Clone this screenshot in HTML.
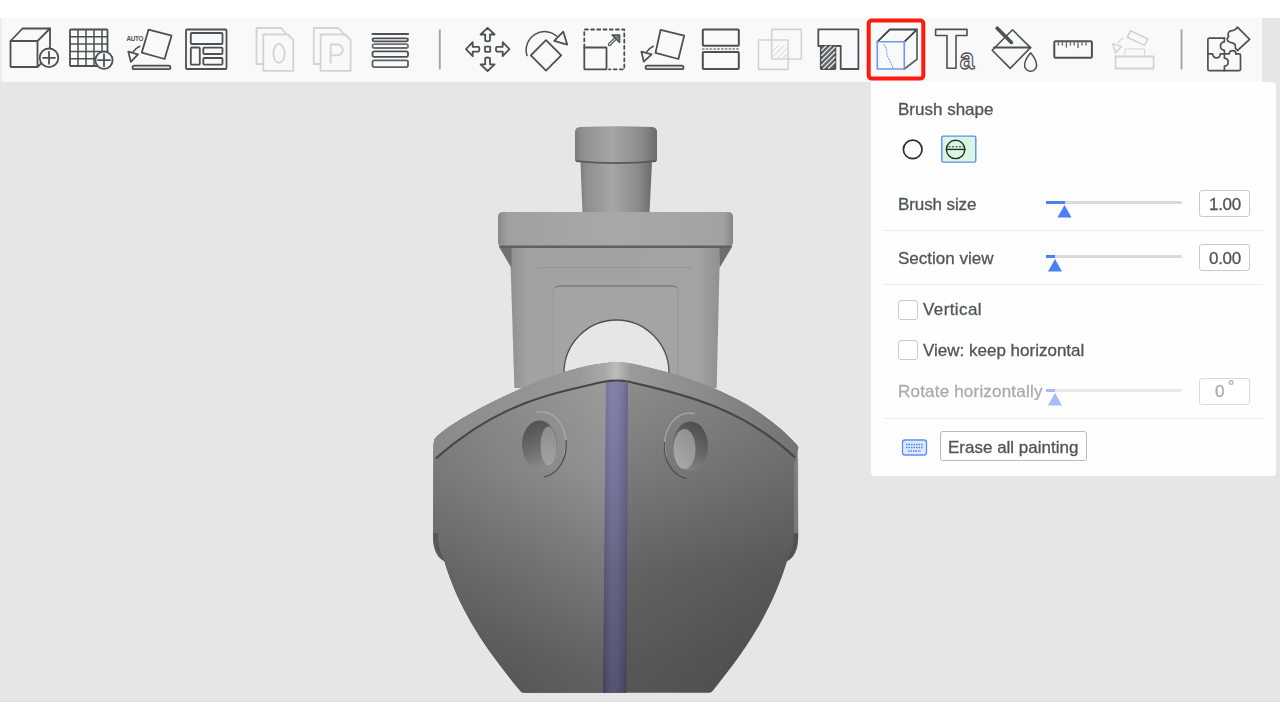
<!DOCTYPE html>
<html><head><meta charset="utf-8">
<style>
html,body{margin:0;padding:0;}
body{width:1280px;height:720px;overflow:hidden;position:relative;background:#e6e6e6;font-family:"Liberation Sans",sans-serif;}
.abs{position:absolute;}
#topw{left:0;top:0;width:1280px;height:18px;background:#ffffff;}
#tb{left:0;top:18px;width:1262px;height:64px;background:#f9f9f9;}
#tbl{left:0;top:18px;width:2px;height:64px;background:#eeeeee;}
#botw{left:0;top:701px;width:1280px;height:19px;background:#ffffff;border-top:1px solid #e1e1e1;box-sizing:border-box;}
#panel{left:871px;top:82px;width:405px;height:394px;background:#fefefe;border-radius:1px 4px 4px 4px;}
.t{position:absolute;font-size:17px;letter-spacing:0px;color:#4f5557;white-space:nowrap;line-height:1;will-change:transform;-webkit-text-stroke:0.3px currentColor;}
.sep{position:absolute;left:884px;width:379px;height:1px;background:#ebebeb;}
.track{position:absolute;left:1046px;width:136px;height:3px;background:#d9d9d9;border-radius:1px;}
.fill{position:absolute;height:3px;background:#4a80f5;}
.box{position:absolute;left:1199px;width:49px;height:25px;border:1px solid #c9c9d1;border-radius:3px;background:#fff;}
.cb{position:absolute;left:898px;width:18px;height:18px;border:1px solid #c9c9d1;border-radius:3px;background:#fff;}
</style></head>
<body>
<div id="topw" class="abs"></div>
<div id="tb" class="abs"></div>
<div id="tbl" class="abs"></div>
<div id="botw" class="abs"></div>

<!-- BENCHY -->
<svg class="abs" style="left:0;top:0" width="1280" height="720" viewBox="0 0 1280 720" id="benchy">
<defs>
  <linearGradient id="gChim" x1="0" x2="1" y1="0" y2="0">
    <stop offset="0" stop-color="#7c7c7c"/>
    <stop offset="0.08" stop-color="#8e8e8e"/>
    <stop offset="0.45" stop-color="#a6a6a6"/>
    <stop offset="0.8" stop-color="#8c8c8c"/>
    <stop offset="1" stop-color="#6c6c6c"/>
  </linearGradient>
  <linearGradient id="gRoof" x1="0" x2="1" y1="0" y2="0">
    <stop offset="0" stop-color="#888"/>
    <stop offset="0.04" stop-color="#a0a0a0"/>
    <stop offset="0.5" stop-color="#a8a8a8"/>
    <stop offset="0.96" stop-color="#a2a2a2"/>
    <stop offset="1" stop-color="#858585"/>
  </linearGradient>
  <linearGradient id="gCab" x1="0" x2="1" y1="0" y2="0">
    <stop offset="0" stop-color="#8f8f8f"/>
    <stop offset="0.08" stop-color="#a2a2a2"/>
    <stop offset="0.9" stop-color="#a3a3a3"/>
    <stop offset="1" stop-color="#909090"/>
  </linearGradient>
  <linearGradient id="gRim" x1="0" x2="1" y1="0" y2="0">
    <stop offset="0" stop-color="#8a8a8a"/>
    <stop offset="0.4" stop-color="#999"/>
    <stop offset="0.47" stop-color="#a8a8a8"/>
    <stop offset="0.5" stop-color="#bdbdbd"/>
    <stop offset="0.54" stop-color="#9a9a9a"/>
    <stop offset="0.75" stop-color="#8a8a8a"/>
    <stop offset="1" stop-color="#727272"/>
  </linearGradient>
  <linearGradient id="gHullL" x1="0" y1="380" x2="0" y2="692" gradientUnits="userSpaceOnUse">
    <stop offset="0" stop-color="#9a9a9a"/>
    <stop offset="0.29" stop-color="#919191"/>
    <stop offset="0.61" stop-color="#787878"/>
    <stop offset="0.9" stop-color="#636363"/>
    <stop offset="1" stop-color="#5f5f5f"/>
  </linearGradient>
  <linearGradient id="gHullR" x1="0" y1="380" x2="0" y2="692" gradientUnits="userSpaceOnUse">
    <stop offset="0" stop-color="#8c8c8c"/>
    <stop offset="0.29" stop-color="#7b7b7b"/>
    <stop offset="0.61" stop-color="#636363"/>
    <stop offset="0.9" stop-color="#585858"/>
    <stop offset="1" stop-color="#565656"/>
  </linearGradient>
  <linearGradient id="gOvL" x1="433" y1="0" x2="600" y2="0" gradientUnits="userSpaceOnUse">
    <stop offset="0" stop-color="#000" stop-opacity="0.17"/>
    <stop offset="1" stop-color="#000" stop-opacity="0"/>
  </linearGradient>
  <linearGradient id="gOvR" x1="626" y1="0" x2="799" y2="0" gradientUnits="userSpaceOnUse">
    <stop offset="0" stop-color="#000" stop-opacity="0"/>
    <stop offset="1" stop-color="#000" stop-opacity="0.13"/>
  </linearGradient>
  <linearGradient id="gStripe" x1="0" x2="0" y1="0" y2="1">
    <stop offset="0" stop-color="#7a7aa8"/>
    <stop offset="0.3" stop-color="#6e6e98"/>
    <stop offset="0.61" stop-color="#5c5c7c"/>
    <stop offset="1" stop-color="#48486a"/>
  </linearGradient>
  <linearGradient id="gStripeH" x1="0" x2="1" y1="0" y2="0">
    <stop offset="0" stop-color="#000" stop-opacity="0.12"/>
    <stop offset="0.4" stop-color="#fff" stop-opacity="0.06"/>
    <stop offset="1" stop-color="#000" stop-opacity="0.15"/>
  </linearGradient>
</defs>
<!-- chimney -->
<path d="M580.5 162 H652 L649.5 213 H582.5 Z" fill="url(#gChim)"/>
<path d="M575 161 V132 Q575 127.5 580 127 Q616 125.5 652 127 Q657 127.5 657 132 V161 Q616 165.5 575 161 Z" fill="url(#gChim)"/>
<path d="M576 161.2 Q616 165.2 656 161.2" fill="none" stroke="#595959" stroke-width="1.8"/>
<!-- cabin -->
<path d="M510 246 H720 L716.7 388 H514.4 Z" fill="url(#gCab)"/>
<path d="M498.5 246 H511.5 L511.5 268 Z" fill="#707070"/>
<path d="M732.5 246 H719.5 L719.5 268 Z" fill="#6c6c6c"/>
<path d="M536 269 L538 267.5 H690 L692 269" fill="none" stroke="#909090" stroke-width="0.8"/>
<!-- roof -->
<path d="M498 242 V217 Q498 212 503 212 H728 Q733 212 733 217 V242 Q733 247 728 247 H503 Q498 247 498 242 Z" fill="url(#gRoof)"/>
<path d="M500 246.8 H731" stroke="#606060" stroke-width="2.6"/>
<!-- window panel -->
<path d="M553.5 386 V290 Q553.5 286 557.5 286 H674 Q678 286 678 290 V386" fill="#a4a4a4" stroke="#979797" stroke-width="0.9"/>
<path d="M555 288.5 Q556 286 559 286 H673 Q676 286 677 288.5" fill="none" stroke="#6e6e6e" stroke-width="1"/>
<!-- arch -->
<path d="M564 390 V373 A52.5 53 0 0 1 669 373 V390 Z" fill="#e6e6e6" stroke="#505050" stroke-width="1.3"/>
<!-- hull body -->
<path d="M434.3 439.6 C446.5 421.8 552 367.25 604 363.4 Q617 360.6 631 363.6 C680 373.6 752 394.3 797.5 445.4 L798.2 539 Q797.5 556 787 561.3 C770 616 744 652 713 690.5 Q711.5 692.8 709 692.8 H524 Q521.5 692.8 520 690.5 C485 648 459 610 444.4 561.3 Q434 556 433 539 L433.5 445 Z" fill="url(#gHullR)"/>
<path d="M434.3 439.6 C446.5 421.8 552 367.25 606 363 L606 692.8 H524 Q521.5 692.8 520 690.5 C485 648 459 610 444.4 561.3 Q434 556 433 539 L433.5 445 Z" fill="url(#gHullL)"/>
<path d="M434.3 439.6 C446.5 421.8 552 367.25 606 363 L606 692.8 H524 Q521.5 692.8 520 690.5 C485 648 459 610 444.4 561.3 Q434 556 433 539 L433.5 445 Z" fill="url(#gOvL)"/>
<path d="M626 380 L626 692.8 H709 Q711.5 692.8 713 690.5 C744 652 770 616 787 561.3 Q797.5 556 798.2 539 L797.5 445.4 C752 394.3 680 373.6 626 380 Z" fill="url(#gOvR)"/>
<!-- rim -->
<path d="M434.3 439.6 C446.5 421.8 552 367.25 604 363.4 Q617 360.6 631 363.6 C680 373.6 752 394.3 797.5 445.4 L798.5 448 L795 457.5 C736 402 668 391.6 629.5 381.8 Q616.5 379.5 603.5 381.8 C552 393.7 500 402 435.8 458.4 L433.5 452 Z" fill="url(#gRim)"/>
<path d="M435.8 458.4 C500 402 552 393.7 603.5 381.8 Q616.5 379.5 629.5 381.8 C668 391.6 736 402 795 457.5" fill="none" stroke="#474747" stroke-width="2.1"/>
<!-- side strips -->
<path d="M433 533 Q433.5 553 444.4 561.3 L441 553 Q438 545 438 533 Z" fill="#505050" opacity="0.7"/>
<path d="M794 462 V535 L798.2 532 V458 Z" fill="#8a8a8a" opacity="0.6"/>
<path d="M798.2 533 Q797 553 787 561.3 L791 552 Q793.5 545 794 533 Z" fill="#4a4a4a" opacity="0.6"/>
<!-- stripe -->
<path d="M606 383 Q617 380 628 383 L626.5 692.8 H603 Z" fill="url(#gStripe)"/>
<path d="M606 383 Q617 380 628 383 L626.5 692.8 H603 Z" fill="url(#gStripeH)"/>
<!-- portholes -->
<defs>
  <linearGradient id="gHoleL" x1="0.2" y1="0" x2="0.5" y2="1">
    <stop offset="0" stop-color="#4e4e4e"/>
    <stop offset="0.6" stop-color="#6e6e6e"/>
    <stop offset="1" stop-color="#8a8a8a"/>
  </linearGradient>
  <linearGradient id="gInL" x1="0" y1="0" x2="0" y2="1">
    <stop offset="0" stop-color="#8e8e8e"/>
    <stop offset="1" stop-color="#a2a2a2"/>
  </linearGradient>
  <linearGradient id="gHoleR" x1="0.8" y1="0" x2="0.4" y2="1">
    <stop offset="0" stop-color="#4a4a4a"/>
    <stop offset="0.6" stop-color="#6a6a6a"/>
    <stop offset="1" stop-color="#858585"/>
  </linearGradient>
  <linearGradient id="gInR" x1="0.8" y1="0" x2="0.2" y2="1">
    <stop offset="0" stop-color="#8e8e8e"/>
    <stop offset="1" stop-color="#aaaaaa"/>
  </linearGradient>
</defs>
<path d="M536 412.2 A25 32 0 0 1 564 456" fill="none" stroke="#b2b2b2" stroke-width="1.3" opacity="0.7"/>
<path d="M566 440 A26 32.5 0 0 1 544 477" fill="none" stroke="#4c4c4c" stroke-width="1.2"/>
<ellipse cx="539.5" cy="444.5" rx="17.5" ry="24" fill="url(#gHoleL)"/>
<ellipse cx="548.5" cy="446" rx="8" ry="19.5" fill="url(#gInL)"/>
<path d="M694.5 413.7 A25 32 0 0 0 666.5 457.5" fill="none" stroke="#acacac" stroke-width="1.5" opacity="0.8"/>
<path d="M664.5 442 A26 32.5 0 0 0 686.5 478.5" fill="none" stroke="#4e4e4e" stroke-width="1.1"/>
<ellipse cx="690.5" cy="446" rx="17.5" ry="24.5" fill="url(#gHoleR)"/>
<ellipse cx="684.5" cy="449" rx="11" ry="20" fill="url(#gInR)"/>
</svg>

<!-- TOOLBAR ICONS -->
<svg class="abs" style="left:0;top:0" width="1280" height="90" viewBox="0 0 1280 90" id="icons">
<g fill="none" stroke="#4b5154" stroke-width="1.8" stroke-linejoin="round" stroke-linecap="round">
  <!-- 1 add cube -->
  <path d="M10.5 41 L22.5 28.5 L50 28.5 L37.5 41 Z"/>
  <rect x="10.5" y="41" width="27" height="26" rx="0.8"/>
  <path d="M50 28.5 V48.5 M37.5 67 L41.5 63"/>
  <circle cx="49" cy="57.8" r="9.3" fill="#f9f9f9"/>
  <path d="M43 57.8 H55 M49 51.8 V63.8" stroke-width="1.8"/>
  <!-- 2 grid add -->
  <rect x="70" y="29.5" width="37.5" height="36.5" rx="0.8"/>
  <path d="M78 29.5 V66 M86 29.5 V66 M94 29.5 V66 M102 29.5 V66 M70 36.8 H107.5 M70 44.1 H107.5 M70 51.4 H107.5 M70 58.7 H107.5" stroke-width="1.5"/>
  <circle cx="104" cy="60.2" r="8.6" fill="#f9f9f9"/>
  <path d="M98 60.2 H110 M104 54.2 V66.2" stroke-width="1.8"/>
  <!-- 3 auto orient -->
  <path d="M148.6 29.6 L171.6 35.6 L164.6 59 L141.8 52.6 Z"/>
  <path d="M139.8 46.2 Q135 48.5 133 52" stroke-width="1.5"/>
  <path d="M128.3 51.6 L138 54.4 L130.8 61.8 Z" stroke-width="1.8"/>
  <rect x="132.5" y="65.6" width="38" height="3.6" rx="1.8" stroke-width="1.7" fill="#e4e4e4"/>
  <text x="126.5" y="41.3" font-family="Liberation Sans" font-size="6.3" font-weight="bold" fill="#4b5154" stroke="none" letter-spacing="-0.3">AUTO</text>
  <!-- 4 arrange -->
  <rect x="186" y="29.5" width="40.5" height="39.5" rx="1"/>
  <rect x="190.8" y="33" width="31.7" height="11" rx="1"/>
  <rect x="190.8" y="47.5" width="9" height="17.2" rx="1"/>
  <rect x="203.3" y="47.6" width="19.2" height="6.4" rx="1"/>
  <rect x="203.3" y="58" width="19.2" height="6.6" rx="1"/>
</g>
<g fill="none" stroke="#d3d3d3" stroke-width="1.8" stroke-linejoin="round" stroke-linecap="round">
  <!-- 5 copy 0 -->
  <path d="M263.3 64 H256.5 V28 H281.3 L285.6 33"/>
  <path d="M263.3 34.5 H287.7 L293.3 40 V70.8 H263.3 Z" fill="#f9f9f9"/>
  <ellipse cx="279" cy="53.4" rx="5.6" ry="9.5"/>
  <!-- 6 copy P -->
  <path d="M320.6 64 H313.8 V28 H338.6 L342.9 33"/>
  <path d="M320.6 34.5 H345 L350.6 40 V70.8 H320.6 Z" fill="#f9f9f9"/>
  <path d="M330.6 63.2 V44.5 H337.5 A5.4 5.4 0 0 1 337.5 55.3 H330.6"/>
</g>
<g fill="none" stroke="#4b5154" stroke-width="1.8" stroke-linejoin="round" stroke-linecap="round">
  <!-- 7 layers -->
  <path d="M372.5 34 H408" stroke-width="2.2"/>
  <rect x="372.5" y="38.3" width="35.5" height="3" rx="1.5" stroke-width="1.8"/>
  <rect x="372.5" y="44.2" width="35.5" height="3.8" rx="1.8" stroke-width="1.8" stroke="#6d7375"/>
  <rect x="372.5" y="51.3" width="35.5" height="5.6" rx="1.8" stroke-width="1.8"/>
  <rect x="372.5" y="60.3" width="35.5" height="6.8" rx="1.8" stroke-width="1.8" stroke="#5b6163"/>
</g>
<path d="M439.8 29.5 V69.5" stroke="#9ea2a3" stroke-width="1.8"/>
<path d="M1181.5 29.5 V69.5" stroke="#9ea2a3" stroke-width="1.8"/>
<g fill="none" stroke="#4b5154" stroke-width="1.8" stroke-linejoin="round" stroke-linecap="round">
  <!-- 9 move -->
  <rect x="485" y="46.6" width="5.2" height="5.2" rx="0.5"/>
  <path d="M487.6 27.8 L494.6 34.5 H490 V40.6 Q487.6 42 485.2 40.6 V34.5 H480.6 Z"/>
  <path d="M487.6 71 L494.6 64.3 H490 V58.2 Q487.6 56.8 485.2 58.2 V64.3 H480.6 Z"/>
  <path d="M466 49.2 L472.7 42.2 V46.8 H478.8 Q480.2 49.2 478.8 51.6 H472.7 V56.2 Z"/>
  <path d="M509.4 49.2 L502.7 42.2 V46.8 H496.6 Q495.2 49.2 496.6 51.6 H502.7 V56.2 Z"/>
  <!-- 10 rotate -->
  <path d="M546 40.2 L561.2 55.4 L546 70.6 L530.8 55.4 Z"/>
  <path d="M527 55.6 A18.5 18.5 0 0 1 557 36.3" stroke-width="1.5"/>
  <path d="M554.2 40.8 L563.3 31.7 L567.2 44.6 Z"/>
  <!-- 11 scale -->
  <path d="M584.3 47.5 V29.5 H624.3 V69.3 H609" stroke-dasharray="3 3.2"/>
  <rect x="584.3" y="47.5" width="22.2" height="21.8" rx="0.5"/>
  <path d="M609.5 44.5 L617.6 36.4" stroke-width="3.4" stroke="#4b5154"/>
  <path d="M609.5 44.5 L617.6 36.4" stroke-width="1.2" stroke="#dcdcdc"/>
  <path d="M612 35 H619.6 V42.6 Z" fill="#7b8183" stroke-width="1.4"/>
  <!-- 12 lay on face -->
  <path d="M660.6 29.8 L684.2 35.6 L678.4 59 L655.5 52.9 Z"/>
  <path d="M653.3 46.2 Q648.5 48.5 646.5 52" stroke-width="1.5"/>
  <path d="M641.4 51.6 L651.6 54.4 L643.8 61.6 Z" stroke-width="1.8"/>
  <rect x="645.5" y="65.6" width="38" height="3.6" rx="1.8" stroke-width="1.7" fill="#e4e4e4"/>
  <!-- 13 cut -->
  <rect x="702.8" y="29.6" width="36" height="16.2" rx="0.8" stroke-width="2"/>
  <rect x="702.8" y="52" width="36" height="17" rx="0.8" stroke-width="2"/>
  <path d="M702.5 49 H739" stroke-dasharray="1.6 2.2" stroke-width="1.4" stroke="#7b8183"/>
</g>
<g fill="none" stroke="#d3d3d3" stroke-width="1.6" stroke-linejoin="round">
  <!-- 14 boolean -->
  <rect x="771.7" y="29.4" width="29.6" height="29.6"/>
  <rect x="758.5" y="40" width="29.6" height="29.4"/>
  <path d="M772 52 L778.5 45.5 M772 57.5 L784 45.5 M777 58.5 L787.5 48 M782.5 58.5 L787.5 53.5" stroke-width="1"/>
</g>
<g fill="none" stroke="#4b5154" stroke-width="1.8" stroke-linejoin="round" stroke-linecap="round">
  <!-- 15 support -->
  <path d="M818.3 46 V29.4 H858.4 V69 H840.7 V46 Z"/>
  <rect x="820.8" y="46" width="14.6" height="23" fill="#5d6366" rx="0.5"/>
  <path d="M821.5 50.5 L826 46 M821.5 55.5 L831 46 M821.5 60.5 L835 47 M821.5 65.5 L835 52 M823.5 68.5 L835 57 M828.5 68.5 L835 62" stroke="#f0f0f0" stroke-width="1.1"/>
</g>
<!-- 16 seam selected -->
<rect x="868.7" y="20.5" width="54.6" height="58.1" rx="3" fill="none" stroke="#ff1a0e" stroke-width="4"/>
<g fill="none" stroke-width="1.8" stroke-linejoin="round" stroke-linecap="round">
  <path d="M877.3 41.8 L889.8 29.5 H917 L904.3 41.8" stroke="#3f4548"/>
  <path d="M917 29.5 V59.2 L904.3 69" stroke="#5f6567"/>
  <rect x="877.3" y="41.8" width="27" height="27.2" stroke="#6d98ee" stroke-width="1.6"/>
  <path d="M884 44.5 L886.5 49 L887 55 L890 61 L893 68" stroke="#7aa2f0" stroke-width="1.1" stroke-dasharray="1.2 1.8"/>
</g>
<g fill="none" stroke="#4b5154" stroke-width="1.8" stroke-linejoin="round" stroke-linecap="round">
  <!-- 17 text -->
  <path d="M935.6 29.4 H967 V35.5 H956 V68.3 H947 V35.5 H935.6 Z" stroke-width="1.6"/>
  <text x="959.8" y="68.6" font-family="Liberation Sans" font-size="29" font-weight="bold" fill="#f9f9f9" stroke="#4b5154" stroke-width="1.3" transform="translate(959.8 68.6) scale(0.9 1) translate(-959.8 -68.6)">a</text>
  <!-- 18 bucket -->
  <path d="M1012.5 29.8 L1030.5 47.6 L1010.2 68.4 L992.2 50.2 Z" stroke-width="1.6"/>
  <path d="M994 47.6 H1030.5" stroke-width="2"/>
  <path d="M997.2 28.2 L1011.4 42.4" stroke-width="3.6"/>
  <path d="M1030.6 52.8 Q1036.6 60 1036.6 65.2 A6 6 0 0 1 1024.6 65.2 Q1024.6 60 1030.6 52.8 Z" stroke-width="1.5"/>
  <!-- 19 measure -->
  <rect x="1054.3" y="41.2" width="37.6" height="16.6" rx="1.2" stroke-width="2"/>
  <path d="M1058.4 42 V45 M1062.4 42 V45 M1066.4 42 V47 M1070.4 42 V45 M1074.2 42 V45 M1078 42 V47.5 M1082 42 V45 M1086 42 V45" stroke-width="1.4" stroke="#6a7072"/>
  <!-- 22 puzzle -->
  <path d="M1224.4 38.1 H1209.4 Q1207.9 38.1 1207.9 39.6 V69.2 Q1207.9 70.7 1209.4 70.7 H1239 Q1240.5 70.7 1240.5 69.2 V55.4 Q1240.5 53.9 1239 53.9 H1236" stroke-width="1.7"/>
  <path d="M1224.4 38.1 V41.8 C1219.2 42.3 1219.2 49.8 1224.4 50.3 V58.2 C1229.4 58.7 1229.4 65.6 1224.4 66.1 V70.7" stroke-width="1.7"/>
  <path d="M1207.9 53.9 H1212.6 C1213.2 59.2 1219.8 59.2 1220.4 53.9 H1229.2 C1229.6 49.6 1235.6 49.6 1236 53.9" stroke-width="1.7"/>
  <path d="M1237.5 27.2 L1249.6 39.4 L1237.5 50.5 L1235.4 48.3 C1235.8 45.2 1234.6 43 1231.6 42.6 C1229.2 42.2 1227 40.6 1227.2 38.6 L1228.6 36.6 C1227.4 33.6 1228.6 31.2 1231 30.8 C1233 30.6 1234.6 30.2 1235.4 29.4 Z" stroke-width="1.7"/>
</g>
<g fill="none" stroke="#d3d3d3" stroke-width="1.6" stroke-linejoin="round" stroke-linecap="round">
  <!-- 20 assembly disabled -->
  <rect x="1115.6" y="56.5" width="38" height="12" stroke-width="1.8"/>
  <path d="M1125 56.5 V48.8 H1144.5 V56.5" stroke-dasharray="1.2 1.6" stroke-width="1.2"/>
  <path d="M1130.6 30.8 L1148 38.9 L1144.6 45.4 L1127.2 37.2 Z"/>
  <path d="M1123.4 38 Q1119.5 40 1117.8 43.5" stroke-width="1.3" stroke-dasharray="1.5 1.2"/>
  <path d="M1112.6 43.7 L1121.6 46.4 L1115.6 52.9 Z"/>
</g>
</svg>

<div id="panel" class="abs"></div>
<div class="t" style="left:898px;top:100.5px;">Brush shape</div>
<div class="t" style="left:897.5px;top:195.5px;letter-spacing:-0.1px;">Brush size</div>
<div class="sep" style="top:230px;"></div>
<div class="t" style="left:898px;top:249.5px;">Section view</div>
<div class="sep" style="top:284px;"></div>
<div class="cb" style="top:300px;"></div>
<div class="t" style="left:923px;top:300.5px;letter-spacing:0.4px;">Vertical</div>
<div class="cb" style="top:340px;"></div>
<div class="t" style="left:923px;top:341.5px;">View: keep horizontal</div>
<div class="t" style="left:898px;top:382.5px;color:#a9acad;letter-spacing:0.2px;">Rotate horizontally</div>
<div class="sep" style="top:418px;"></div>

<div class="track" style="top:201px;"></div>
<div class="fill" style="left:1046px;top:201px;width:19px;"></div>
<div class="track" style="top:255px;"></div>
<div class="fill" style="left:1046px;top:255px;width:9px;"></div>
<div class="track" style="top:389px;background:#e9e9e9;"></div>
<div class="fill" style="left:1046px;top:389px;width:9px;background:#a3bdf8;"></div>

<div class="box" style="top:190px;"></div>
<div class="t" style="left:1208.5px;top:195.5px;letter-spacing:-0.3px;">1.00</div>
<div class="box" style="top:244px;"></div>
<div class="t" style="left:1208.5px;top:249.5px;letter-spacing:-0.3px;">0.00</div>
<div class="box" style="top:378px;border-color:#dadade;"></div>
<div class="t" style="left:1215px;top:382.5px;color:#a9acad;">0</div><div class="t" style="left:1228px;top:379px;color:#aeb1b2;font-size:16px;">°</div>

<div class="abs" style="left:940px;top:431px;width:145px;height:28px;border:1px solid #b9b9c3;border-radius:3px;background:#fff;"></div>
<div class="t" style="left:948px;top:438.5px;">Erase all painting</div>

<svg class="abs" style="left:0;top:0" width="1280" height="720" viewBox="0 0 1280 720" id="panelsvg">
<circle cx="912.7" cy="149.4" r="9.3" fill="none" stroke="#2c2c2c" stroke-width="1.7"/>
<rect x="941.8" y="136.1" width="34" height="26" rx="1.5" fill="#d8f8e4" stroke="#5b8ef5" stroke-width="1.4"/>
<circle cx="955.6" cy="149.4" r="9.2" fill="none" stroke="#2c2c2c" stroke-width="1.4"/>
<path d="M945.8 149.4 H965.4" stroke="#2c2c2c" stroke-width="1.4"/>
<path d="M948.5 146.8 H963" stroke="#2c2c2c" stroke-width="1.1" stroke-dasharray="2 1.5"/>
<path d="M1064.5 205 L1071.5 217.5 H1057.5 Z" fill="#4a80f5"/>
<path d="M1055 259 L1062 271.5 H1048 Z" fill="#4a80f5"/>
<path d="M1055 392.8 L1062 405.6 H1048 Z" fill="#a3bdf8"/>
<rect x="902.5" y="440" width="24" height="15" rx="2.5" fill="#dfe8fd" stroke="#5b8ef5" stroke-width="1.3"/>
<path d="M906 444.5 H923 M906 447.5 H923 M908 451 H921" stroke="#4a80f5" stroke-width="1.4" stroke-dasharray="1.5 1"/>
</svg>
</body></html>
